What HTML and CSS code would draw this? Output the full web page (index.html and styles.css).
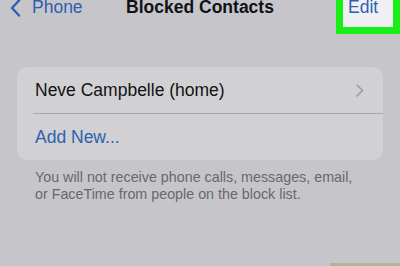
FILE: index.html
```html
<!DOCTYPE html>
<html>
<head>
<meta charset="utf-8">
<link rel="stylesheet" href="styles.css">
</head>
<body>
<div class="screen">
  <header class="nav">
    <div class="back">
      <svg class="back-icon" width="13" height="18" viewBox="0 0 13 18"><polyline points="10,1.5 3,9 10,16.5" fill="none" stroke="#2f5fb0" stroke-width="2.4" stroke-linecap="round" stroke-linejoin="round"/></svg>
      <span class="back-label">Phone</span>
    </div>
    <div class="title">Blocked Contacts</div>
    <div class="edit-wrap">
      <div class="edit">Edit</div>
    </div>
  </header>

  <section class="card">
    <div class="row">
      <span class="row-text">Neve Campbelle (home)</span>
      <svg class="chev" width="8" height="13" viewBox="0 0 8 13"><polyline points="1,1 6.5,6.5 1,12" fill="none" stroke="#9c9ca0" stroke-width="1.6" stroke-linecap="round" stroke-linejoin="round"/></svg>
    </div>
    <div class="sep"></div>
    <div class="row">
      <span class="row-text link">Add New...</span>
    </div>
  </section>

  <p class="footer">You will not receive phone calls, messages, email, or FaceTime from people on the block list.</p>

  <div class="corner-mark"></div>
</div>
</body>
</html>
```

FILE: styles.css
```css
html, body {
  margin: 0;
  padding: 0;
}
body {
  background: #c6c5ca;
  font-family: "Liberation Sans", Arial, sans-serif;
  color: #111114;
  overflow: hidden;
}
.screen {
  position: relative;
  width: 400px;
  height: 266px;
  overflow: hidden;
}
.nav {
  display: grid;
  grid-template-columns: 1fr auto 1fr;
  align-items: start;
  height: 34px;
}
.back {
  display: flex;
  align-items: flex-start;
  padding-left: 9px;
  color: #2f5fb0;
  font-size: 17.5px;
  line-height: 15px;
}
.back-icon {
  margin-top: -1px;
  margin-right: 10px;
}
.back-label {
  display: block;
}
.title {
  font-size: 17.5px;
  font-weight: bold;
  line-height: 15px;
  color: #111114;
}
.edit-wrap {
  display: flex;
  justify-content: flex-end;
}
.edit {
  box-sizing: border-box;
  width: 64px;
  height: 34px;
  border: 7px solid #19ee19;
  border-top: 0;
  background: #efeff4;
  color: #2f5fb0;
  font-size: 17.5px;
  line-height: 15px;
  padding-left: 5px;
}
.card {
  margin: 33px 17px 0;
  background: #d1d1d3;
  border-radius: 10px;
}
.row {
  display: flex;
  align-items: center;
  justify-content: space-between;
  height: 46px;
  padding: 0 19px 0 18px;
  font-size: 17.5px;
}
.row-text {
  line-height: 46px;
}
.link {
  color: #2f5fb0;
}
.sep {
  height: 1px;
  margin-left: 16px;
  background: #a8a8ab;
}
.footer {
  margin: 9px 0 0 35px;
  width: 330px;
  font-size: 14.3px;
  line-height: 16.6px;
  color: #68686c;
}
.corner-mark {
  position: absolute;
  left: 330px;
  right: 0;
  bottom: 0;
  height: 3px;
  background: #a9b99f;
}
```
